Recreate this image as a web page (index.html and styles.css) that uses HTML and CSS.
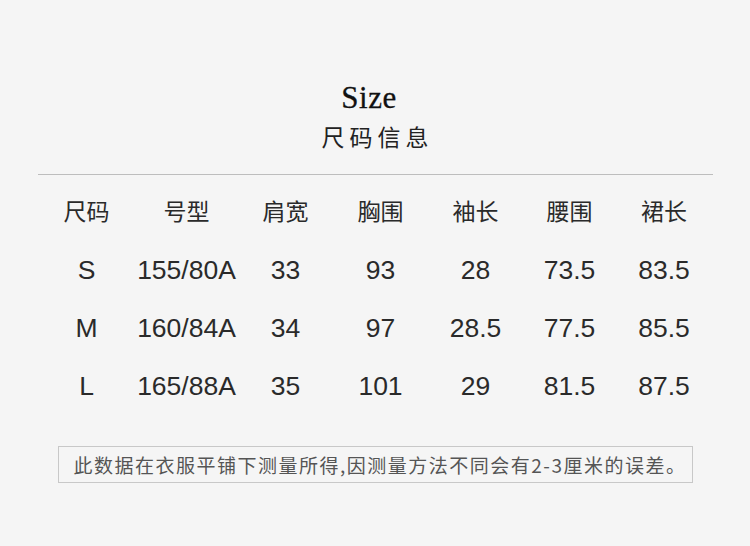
FILE: index.html
```html
<!DOCTYPE html>
<html lang="zh">
<head>
<meta charset="utf-8">
<link rel="stylesheet" href="styles.css">
</head>
<body>
<div class="page">
  <header class="title">
    <div class="title-en">Size</div>
    <div class="title-cn">尺码信息</div>
  </header>
  <div class="rule"></div>
  <div class="table">
    <div class="row head">
      <div class="cell">尺码</div><div class="cell">号型</div><div class="cell">肩宽</div><div class="cell">胸围</div><div class="cell">袖长</div><div class="cell">腰围</div><div class="cell">裙长</div>
    </div>
    <div class="row">
      <div class="cell">S</div><div class="cell">155/80A</div><div class="cell">33</div><div class="cell">93</div><div class="cell">28</div><div class="cell">73.5</div><div class="cell">83.5</div>
    </div>
    <div class="row">
      <div class="cell">M</div><div class="cell">160/84A</div><div class="cell">34</div><div class="cell">97</div><div class="cell">28.5</div><div class="cell">77.5</div><div class="cell">85.5</div>
    </div>
    <div class="row">
      <div class="cell">L</div><div class="cell">165/88A</div><div class="cell">35</div><div class="cell">101</div><div class="cell">29</div><div class="cell">81.5</div><div class="cell">87.5</div>
    </div>
  </div>
  <div class="note">此数据在衣服平铺下测量所得,因测量方法不同会有2-3厘米的误差。</div>
</div>
</body>
</html>
```
FILE: styles.css
```css
html, body {
  margin: 0;
  padding: 0;
  background: #f5f5f5;
}
.page {
  width: 750px;
  height: 546px;
  display: flex;
  flex-direction: column;
  align-items: center;
  padding-top: 80px;
  box-sizing: border-box;
  color: #333;
}
.title {
  display: flex;
  flex-direction: column;
  align-items: center;
}
.title-en {
  font-family: "Liberation Serif", serif;
  font-size: 31px;
  line-height: 36px;
  letter-spacing: 0.5px;
  color: #111;
  margin-right: 12px;
  -webkit-text-stroke: 0.3px #111;
}
.title-cn {
  font-family: "Noto Sans CJK SC", sans-serif;
  font-size: 23px;
  line-height: 30px;
  letter-spacing: 5px;
  margin-left: 5px;
  margin-top: 5px;
  color: #222;
}
.rule {
  width: 675px;
  height: 1px;
  background: #bdbdbd;
  margin-top: 23px;
}
.table {
  width: 675px;
  margin-top: 22px;
  display: flex;
  flex-direction: column;
}
.row {
  display: grid;
  grid-template-columns: 98px 102px 96px 94px 96px 92px 97px;
  height: 58px;
  align-items: start;
}
.cell {
  text-align: center;
  font-family: "Liberation Sans", Arial, sans-serif;
  font-size: 26.5px;
  line-height: 30px;
  color: #2a2a2a;
}
.head .cell {
  font-family: "Noto Sans CJK SC", sans-serif;
  font-size: 23px;
  line-height: 32px;
  margin-top: -3px;
}
.note {
  margin-top: 17px;
  width: 635px;
  height: 37px;
  box-sizing: border-box;
  border: 1px solid #c8c8c8;
  padding-left: 15px;
  font-family: "Noto Sans CJK SC", sans-serif;
  font-size: 19px;
  line-height: 35px;
  letter-spacing: 1.5px;
  color: #555;
  text-align: left;
  white-space: nowrap;
}
```
